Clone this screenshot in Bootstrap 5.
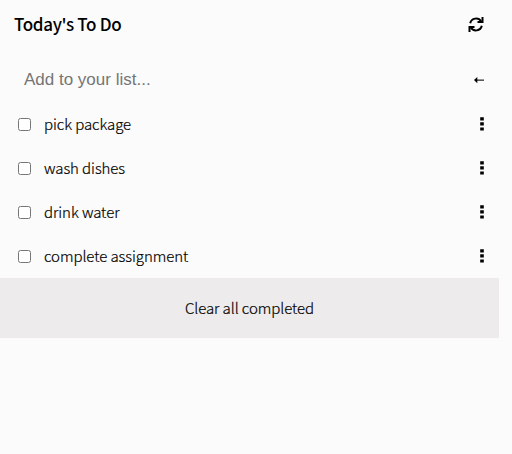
<!DOCTYPE html>
<html lang="en">
<head>
<meta charset="utf-8">
<meta name="viewport" content="width=device-width, initial-scale=1">
<title>Today's To Do</title>
<link href="https://cdn.jsdelivr.net/npm/bootstrap@5.3.0/dist/css/bootstrap.min.css" rel="stylesheet">
<style>
body { background: #fbfbfb; color: #000; font-family: "Noto Sans CJK JP", sans-serif; font-size: 15px; font-weight: 300; line-height: 22px; }
.todo { width: 499px; }
.todo-head { height: 50px; padding: 0 14px; }
.todo-title { font-size: 17px; line-height: 26px; font-weight: 500; letter-spacing: -.33px; padding-bottom: 2px; }
.todo-add { height: 52px; padding: 7px 14px 0 24px; }
.todo-input { font: 17px/24px "Liberation Sans", sans-serif; outline: 0; }
.todo-input::placeholder { color: #757575; opacity: 1; }
.todo-item { height: 44px; padding: 0 14px 0 18px; gap: 13px; }
.todo-item label, .todo-clear { letter-spacing: -.07px; -webkit-text-stroke: .2px #000; }
.todo-check { width: 13px; height: 13px; margin: 0; }
.todo-clear { height: 60px; background: #edebec; color: #000; font-size: 15px; font-weight: 300; }
</style>
</head>
<body>
<main class="todo">
  <header class="todo-head d-flex align-items-center justify-content-between">
    <h1 class="todo-title m-0">Today's To Do</h1>
    <svg width="18" height="18" viewBox="0 0 18 18" fill="none" stroke="#000" stroke-width="2"><path d="M3.2 7.2A6 6 0 0 1 14.2 5.5M14.8 9.8A6 6 0 0 1 3.8 11.5"/><path d="M15.5 1v5h-5M2.5 16v-5h5"/></svg>
  </header>
  <form class="todo-add d-flex align-items-center">
    <input class="todo-input flex-grow-1 border-0 bg-transparent p-0" type="text" placeholder="Add to your list..." aria-label="New task">
    <svg width="11" height="8" viewBox="0 0 11 8"><path d="M3 3.5h7v1.300H3z" fill="#333"/><path d="M0 4.100 3.300 1v6.200z"/></svg>
  </form>
  <ul class="list-unstyled m-0">
    <li class="todo-item d-flex align-items-center"><input class="todo-check" type="checkbox" id="task1"><label class="flex-grow-1" for="task1">pick package</label><svg width="6" height="16" viewBox="0 0 6 16"><path d="M1.200 1.200h3.600v3.200H1.200zM1.200 6.300h3.600v3.200H1.200zM1.200 11.400h3.600v3.200H1.200z"/></svg></li>
    <li class="todo-item d-flex align-items-center"><input class="todo-check" type="checkbox" id="task2"><label class="flex-grow-1" for="task2">wash dishes</label><svg width="6" height="16" viewBox="0 0 6 16"><path d="M1.200 1.200h3.600v3.200H1.200zM1.200 6.300h3.600v3.200H1.200zM1.200 11.400h3.600v3.200H1.200z"/></svg></li>
    <li class="todo-item d-flex align-items-center"><input class="todo-check" type="checkbox" id="task3"><label class="flex-grow-1" for="task3">drink water</label><svg width="6" height="16" viewBox="0 0 6 16"><path d="M1.200 1.200h3.600v3.200H1.200zM1.200 6.300h3.600v3.200H1.200zM1.200 11.400h3.600v3.200H1.200z"/></svg></li>
    <li class="todo-item d-flex align-items-center"><input class="todo-check" type="checkbox" id="task4"><label class="flex-grow-1" for="task4">complete assignment</label><svg width="6" height="16" viewBox="0 0 6 16"><path d="M1.200 1.200h3.600v3.200H1.200zM1.200 6.300h3.600v3.200H1.200zM1.200 11.400h3.600v3.200H1.200z"/></svg></li>
  </ul>
  <button class="todo-clear w-100 border-0 d-flex align-items-center justify-content-center" type="button">Clear all completed</button>
</main>
<script src="https://cdn.jsdelivr.net/npm/bootstrap@5.3.0/dist/js/bootstrap.bundle.min.js"></script>
</body>
</html>
